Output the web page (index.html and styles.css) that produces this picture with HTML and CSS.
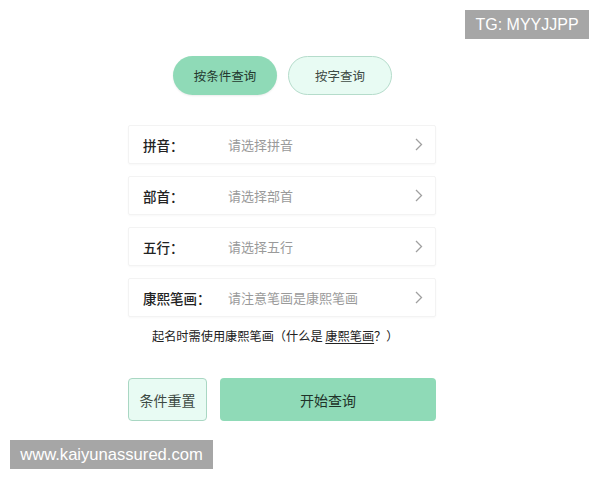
FILE: index.html
```html
<!DOCTYPE html>
<html lang="zh">
<head>
<meta charset="utf-8">
<link rel="stylesheet" href="styles.css">
</head>
<body>
<div class="page">
  <div class="content">
    <div class="tabs">
      <div class="tab tab-active">按条件查询</div>
      <div class="tab tab-idle">按字查询</div>
    </div>
    <div class="rows">
      <div class="row"><span class="label">拼音：</span><span class="ph">请选择拼音</span><span class="chev"><svg width="8" height="13" viewBox="0 0 8 13"><path d="M1 1 L6.5 6.5 L1 12" fill="none" stroke="#a0a0a0" stroke-width="1.3"/></svg></span></div>
      <div class="row"><span class="label">部首：</span><span class="ph">请选择部首</span><span class="chev"><svg width="8" height="13" viewBox="0 0 8 13"><path d="M1 1 L6.5 6.5 L1 12" fill="none" stroke="#a0a0a0" stroke-width="1.3"/></svg></span></div>
      <div class="row"><span class="label">五行：</span><span class="ph">请选择五行</span><span class="chev"><svg width="8" height="13" viewBox="0 0 8 13"><path d="M1 1 L6.5 6.5 L1 12" fill="none" stroke="#a0a0a0" stroke-width="1.3"/></svg></span></div>
      <div class="row"><span class="label">康熙笔画：</span><span class="ph">请注意笔画是康熙笔画</span><span class="chev"><svg width="8" height="13" viewBox="0 0 8 13"><path d="M1 1 L6.5 6.5 L1 12" fill="none" stroke="#a0a0a0" stroke-width="1.3"/></svg></span></div>
    </div>
    <p class="note">起名时需使用康熙笔画（什么是 <u>康熙笔画</u>？）</p>
    <div class="actions">
      <div class="btn-reset">条件重置</div>
      <div class="btn-start">开始查询</div>
    </div>
  </div>
  <div class="badge badge-tg">TG: MYYJJPP</div>
  <div class="badge badge-site">www.kaiyunassured.com</div>
</div>
</body>
</html>
```
FILE: styles.css
```css
* { box-sizing: border-box; }
html, body { margin: 0; padding: 0; background: #fff; }
body { font-family: "Noto Sans CJK SC", "Noto Sans", sans-serif; color: #222; }
.page { position: relative; width: 600px; height: 480px; overflow: hidden; }
.content { width: 308px; margin-left: 128px; padding-top: 56px; }
.tabs { display: flex; justify-content: center; gap: 11px; padding-left: 1px; }
.tab { width: 104px; height: 39px; border-radius: 20px; display: flex; align-items: center; justify-content: center; font-size: 12.5px; }
.tab-active { background: #8fdab7; color: #24392f; box-shadow: 0 1px 2px rgba(0,0,0,0.08); }
.tab-idle { background: #e8fbf3; border: 1px solid #b5dccb; color: #3d4a44; }
.rows { margin-top: 30px; display: flex; flex-direction: column; gap: 12px; }
.row { height: 39px; display: flex; align-items: center; padding-left: 14px; padding-right: 12px; border: 1px solid #f3f3f3; border-radius: 2px; box-shadow: 0 1px 2px rgba(0,0,0,0.03); }
.label { width: 85px; font-size: 13.5px; font-weight: 500; color: #222; }
.ph { flex: 1; font-size: 13px; color: #9a9a9a; }
.chev { display: flex; align-items: center; }
.note { margin: 10px 0 0 24px; font-size: 12.2px; color: #222; line-height: 18px; }
.note u { text-underline-offset: 2px; }
.actions { display: flex; gap: 13px; margin-top: 33px; }
.btn-reset { width: 79px; height: 43px; border: 1px solid #a9d7c3; background: #e8fbf3; border-radius: 4px; display: flex; align-items: center; justify-content: center; font-size: 14px; color: #3d4a44; }
.btn-start { flex: 1; height: 43px; background: #8fdab7; border-radius: 4px; display: flex; align-items: center; justify-content: center; font-size: 14px; color: #1f3329; }
.badge { position: absolute; background: #a6a6a6; color: #fff; font-family: "Liberation Sans", Arial, sans-serif; font-size: 16px; height: 29px; display: flex; align-items: center; justify-content: center; }
.badge-tg { left: 465px; top: 10px; width: 124px; }
.badge-site { left: 10px; top: 440px; width: 203px; font-size: 16.6px; }
```
